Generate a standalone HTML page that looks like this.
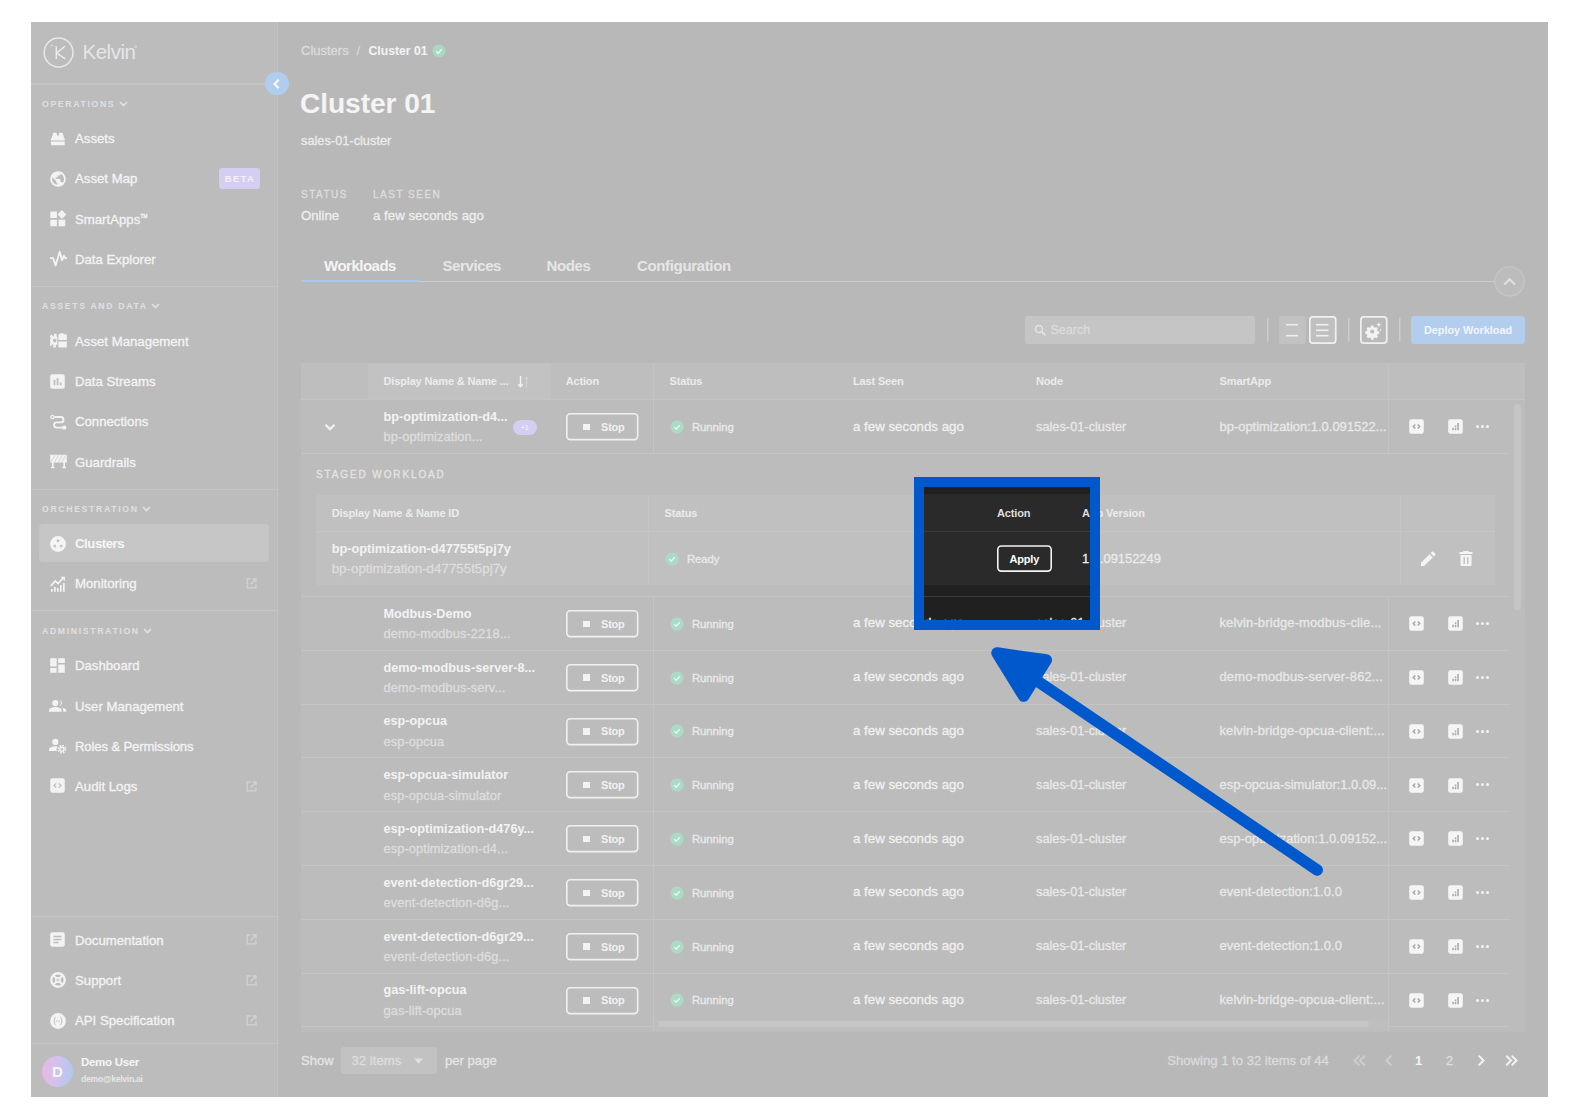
<!DOCTYPE html>
<html>
<head>
<meta charset="utf-8">
<title>Cluster 01</title>
<style>
*{box-sizing:border-box;margin:0;padding:0}
html,body{width:1580px;height:1120px;background:#fff;overflow:hidden}
body{font-family:"Liberation Sans",sans-serif;color:#f4f4f4;position:relative}
#app{position:absolute;left:31px;top:22px;width:1517px;height:1075px;background:#b8b8b8;overflow:hidden}
.abs{position:absolute}
/* coordinates inside #app are page coords minus (31,22); we use a wrapper shifted so children can use page coords */
#pg{position:absolute;left:-31px;top:-22px;width:1580px;height:1120px}
#side{position:absolute;left:31px;top:22px;width:247.100px;height:1075px;background:#bcbcbc;border-right:1.600px solid #c3c3c3}
.hr{position:absolute;height:1px;background:#c6c6c6}
.sec{position:absolute;left:42px;font-size:8.700px;font-weight:bold;letter-spacing:1.650px;color:#e0e0e0;line-height:10px;white-space:nowrap}
.mi{position:absolute;left:75px;font-size:13.200px;color:#f4f4f4;line-height:16px;white-space:nowrap;letter-spacing:0px}
.ico{position:absolute;left:50px;width:15px;height:15px}
.ext{position:absolute;left:246px;width:11px;height:11px}
.t{position:absolute;white-space:nowrap}
.t,.mi{-webkit-text-stroke:0.3px}
[style*="font-weight:bold"]{-webkit-text-stroke:0}
</style>
</head>
<body>
<div id="app"><div id="pg">

<!-- ============ SIDEBAR ============ -->
<div id="side"></div>
<div id="sidebar-content">
<svg class="abs" style="left:42px;top:36px" width="34" height="34" viewBox="0 0 34 34">
 <circle cx="16.600" cy="16.500" r="14.400" fill="none" stroke="#e8e8e8" stroke-width="1.500"/>
 <path d="M14.300 10.200V22.900M22.900 10.200L14.800 17L23.200 22.900" fill="none" stroke="#ececec" stroke-width="1.500"/>
 <circle cx="10" cy="9.600" r="0.800" fill="#ececec"/>
</svg>
<div class="t" style="left:82.500px;top:38.500px;font-size:20.500px;line-height:26px;color:#e6e6e6;letter-spacing:-0.500px;-webkit-text-stroke:0">Kelvin</div>
<div class="abs" style="left:133.500px;top:44.500px;width:3px;height:3px;border-radius:50%;border:0.800px solid #e0e0e0"></div>
<div class="hr" style="left:31px;top:82.500px;width:246px;height:2px;background:#c5c5c5"></div>
<div class="abs" style="left:265px;top:71.700px;width:23.600px;height:23.600px;border-radius:50%;background:#b1cdee"></div>
<svg class="abs" style="left:271px;top:77.700px" width="12" height="12" viewBox="0 0 12 12"><path d="M7.700 1.700L3.500 6L7.700 10.300" fill="none" stroke="#f8f8f8" stroke-width="2.100"/></svg>
<div class="sec" style="top:98.5px">OPERATIONS<svg width="9" height="7" viewBox="0 0 9 7" style="margin-left:3.500px"><path d="M1 2L4.500 5.500L8 2" fill="none" stroke="#e2e2e2" stroke-width="1.600"/></svg></div>
<svg class="abs" style="left:51px;top:131.5px" width="14" height="14" viewBox="0 0 14 14"><path d="M0 6.200h13.700v2.300H0zM0 9.600h13.700v3.600H0zM1 6.200V3.400h.9V1.600c0-.5.400-.9.900-.9h2.200c.5 0 .9.400.9.900v1.800h2V1.600c0-.5.400-.9.900-.9h2.200c.5 0 .9.400.9.900v1.800h.9v2.800z" fill="#f3f3f3"/></svg>
<div class="mi" style="top:131.20000000000002px;">Assets</div>
<svg class="abs" style="left:49.5px;top:170.7px" width="16" height="16" viewBox="0 0 16 16"><circle cx="8" cy="8" r="7.800" fill="#f3f3f3"/><path d="M2.300 6.300l3.600 3.500v.9c0 .8.700 1.400 1.500 1.400v1.700A5.900 5.900 0 0 1 2.300 6.300zM12.600 11.900c-.2-.6-.8-1-1.400-1h-.7V8.700c0-.4-.3-.7-.7-.7H5.600V6.500h1.400c.4 0 .7-.3.7-.7V4.400h1.500c.8 0 1.400-.6 1.400-1.400v-.3a5.900 5.900 0 0 1 2 9.200z" fill="#bcbcbc"/></svg>
<div class="mi" style="top:171.4px;">Asset Map</div>
<div class="abs" style="left:219px;top:168px;width:41px;height:21px;border-radius:3px;background:#d6cdf3;color:#f3f0fb;font-size:9.500px;font-weight:bold;letter-spacing:1.300px;line-height:21px;text-align:center;padding-left:1px">BETA</div>
<svg class="abs" style="left:50px;top:210px" width="16.5" height="16.5" viewBox="0 0 16.5 16.5"><path d="M0.300 1.500h6.600v6.600H0.300zM0.300 9.700h6.600v6.600H0.300zM8.600 9.700h6.600v6.600H8.600zM11.900 0l4.300 4.500l-4.300 4.500l-4.300-4.500z" fill="#f3f3f3"/></svg>
<div class="mi" style="top:211.6px;">SmartApps<span style="font-size:5px;position:relative;top:-5.800px;letter-spacing:0">TM</span></div>
<svg class="abs" style="left:49.5px;top:250px" width="17.5" height="18" viewBox="0 0 17.5 18"><path d="M0.200 8.200h3l2.400 7.300L9.700 1.800l2.300 8.500 1.900-4.600 1.200 2.500h1.800" fill="none" stroke="#f3f3f3" stroke-width="1.800" stroke-linejoin="round" stroke-linecap="round"/></svg>
<div class="mi" style="top:252.20000000000002px;">Data Explorer</div>
<div class="hr" style="left:31px;top:286px;width:246px"></div>
<div class="sec" style="top:301.2px">ASSETS AND DATA<svg width="9" height="7" viewBox="0 0 9 7" style="margin-left:3.500px"><path d="M1 2L4.500 5.500L8 2" fill="none" stroke="#e2e2e2" stroke-width="1.600"/></svg></div>
<svg class="abs" style="left:49.5px;top:333.2px" width="17" height="15.5" viewBox="0 0 17 15.5"><g transform="translate(4.700,7.600)"><circle r="4.600" fill="#f3f3f3"/><circle r="5.600" fill="none" stroke="#f3f3f3" stroke-width="2.400" stroke-dasharray="2.600 1.800" transform="rotate(-14)"/><circle r="1.800" fill="#bcbcbc"/></g><rect x="7.300" y="-1" width="11" height="17" fill="#bcbcbc"/><path d="M8.400 6.900V2.300c0-.6.400-1 1-1h.8V.3h3.300v1h2.300c.6 0 1 .4 1 1v4.600zM8.400 8.600h8.400v4.900c0 .6-.4 1-1 1H9.400c-.6 0-1-.4-1-1z" fill="#f3f3f3"/></svg>
<div class="mi" style="top:333.7px;">Asset Management</div>
<svg class="abs" style="left:50px;top:373.8px" width="15" height="15" viewBox="0 0 15 15"><rect x=".2" y=".2" width="14.600" height="14.600" rx="2.200" fill="#f3f3f3"/><path d="M3.600 5.800h1.700v5.500H3.600zM6.700 4h1.700v7.300H6.700zM9.800 8.600h1.700v2.700H9.800z" fill="#bcbcbc"/></svg>
<div class="mi" style="top:373.7px;">Data Streams</div>
<svg class="abs" style="left:49.5px;top:413.5px" width="17" height="16" viewBox="0 0 17 16"><path d="M4.400 3h6.400a2.700 2.700 0 0 1 0 5.400H6.600a2.600 2.600 0 0 0 0 5.200h5.600" fill="none" stroke="#f3f3f3" stroke-width="1.900"/><circle cx="2.400" cy="3" r="1.600" fill="none" stroke="#f3f3f3" stroke-width="1.300"/><circle cx="14.200" cy="13.600" r="2.200" fill="#f3f3f3"/></svg>
<div class="mi" style="top:414.4px;">Connections</div>
<svg class="abs" style="left:49.5px;top:454.3px" width="17" height="15" viewBox="0 0 17 15"><path d="M.2 .8h16.600v7.600H.2zM2 8.400h1.700v4.500h1v1.300H1v-1.300h1zM13.300 8.400H15v4.500h1v1.300h-3.700v-1.300h1z" fill="#f3f3f3"/><path d="M1 7.800L5 1.300M4.600 7.800l4-6.500M8.200 7.800l4-6.500M11.800 7.800l4-6.500" stroke="#bcbcbc" stroke-width=".6"/></svg>
<div class="mi" style="top:454.7px;">Guardrails</div>
<div class="hr" style="left:31px;top:488.500px;width:246px"></div>
<div class="sec" style="top:503.7px">ORCHESTRATION<svg width="9" height="7" viewBox="0 0 9 7" style="margin-left:3.500px"><path d="M1 2L4.500 5.500L8 2" fill="none" stroke="#e2e2e2" stroke-width="1.600"/></svg></div>
<div class="abs" style="left:39px;top:524px;width:230px;height:38px;border-radius:4px;background:#c6c6c6"></div>
<svg class="abs" style="left:49.5px;top:535.8px" width="16" height="16" viewBox="0 0 16 16"><circle cx="8" cy="8" r="7.900" fill="#f5f5f5"/><circle cx="8" cy="4.700" r="1.500" fill="#c6c6c6"/><circle cx="4.800" cy="10" r="1.500" fill="#c6c6c6"/><circle cx="11.200" cy="10" r="1.500" fill="#c6c6c6"/></svg>
<div class="mi" style="top:536.1999999999999px;font-weight:bold;letter-spacing:-0.450px;color:#f6f6f6">Clusters</div>
<svg class="abs" style="left:49.5px;top:575.5px" width="17" height="16" viewBox="0 0 17 16"><path d="M.8 9.800L5.300 5l2.900 2.600L13.300 1.800" fill="none" stroke="#f3f3f3" stroke-width="1.700"/><path d="M10.600 .8h4.300v4.300zM1 13h1.700v2.800H1zM4 11h1.700v4.800H4zM7 12h1.700v3.800H7zM10 9h1.700v6.800H10zM13 7h1.700v8.800H13z" fill="#f3f3f3"/></svg>
<div class="mi" style="top:576.4px;">Monitoring</div>
<svg class="ext" style="top:578.2px" viewBox="0 0 11 11"><path d="M4.500 1H1.200v8.800H10V6.500M6.500 1H10v3.500M10 1L4.800 6.200" fill="none" stroke="#d2d2d2" stroke-width="1.300"/></svg>
<div class="hr" style="left:31px;top:610px;width:246px"></div>
<div class="sec" style="top:625.7px">ADMINISTRATION<svg width="9" height="7" viewBox="0 0 9 7" style="margin-left:3.500px"><path d="M1 2L4.500 5.500L8 2" fill="none" stroke="#e2e2e2" stroke-width="1.600"/></svg></div>
<svg class="abs" style="left:50px;top:657.8px" width="15" height="15" viewBox="0 0 15 15"><path d="M.2 .2h6.500v8.300H.2zM8.200 .2h6.600v4.800H8.200zM8.200 6.500h6.600v8.300H8.200zM.2 10h6.500v4.800H.2z" fill="#f3f3f3"/></svg>
<div class="mi" style="top:658.1999999999999px;">Dashboard</div>
<svg class="abs" style="left:49px;top:698.5px" width="17.5" height="14" viewBox="0 0 17.5 14"><circle cx="6.300" cy="4" r="3.100" fill="#f3f3f3"/><path d="M0 12.800v-1.600c0-2.100 4.200-3.200 6.300-3.200s6.300 1.100 6.300 3.200v1.600z" fill="#f3f3f3"/><path d="M10.700 1a3.100 3.100 0 0 1 0 6 4.600 4.600 0 0 0 0-6zM12.900 8.400c1.900.4 4.400 1.300 4.400 2.900v1.500h-3.100v-1.600c0-1.200-.5-2.100-1.300-2.800z" fill="#f3f3f3"/></svg>
<div class="mi" style="top:698.5px;">User Management</div>
<svg class="abs" style="left:49px;top:738px" width="17.5" height="15.5" viewBox="0 0 17.5 15.5"><circle cx="6.300" cy="3.900" r="3.100" fill="#f3f3f3"/><path d="M0 13v-1.600c0-2.100 4.200-3.200 6.300-3.200.6 0 1.300.1 2.100.2a5.400 5.400 0 0 0-.6 4.600z" fill="#f3f3f3"/><g transform="translate(12.900,11.200)"><circle r="2.600" fill="#f3f3f3"/><circle r="3.500" fill="none" stroke="#f3f3f3" stroke-width="1.800" stroke-dasharray="1.500 1.250"/><circle r="1.200" fill="#bcbcbc"/></g></svg>
<div class="mi" style="top:738.6999999999999px;letter-spacing:-0.170px">Roles &amp; Permissions</div>
<svg class="abs" style="left:50px;top:778.3px" width="15" height="15" viewBox="0 0 15 15"><rect x=".2" y=".2" width="14.600" height="14.600" rx="2.200" fill="#f3f3f3"/><path d="M6.200 5.400L4.100 7.500l2.100 2.100M8.800 5.400l2.100 2.100-2.100 2.100" fill="none" stroke="#bcbcbc" stroke-width="1.200"/></svg>
<div class="mi" style="top:778.6999999999999px;">Audit Logs</div>
<svg class="ext" style="top:780.5px" viewBox="0 0 11 11"><path d="M4.500 1H1.200v8.800H10V6.500M6.500 1H10v3.500M10 1L4.800 6.200" fill="none" stroke="#d2d2d2" stroke-width="1.300"/></svg>
<div class="hr" style="left:31px;top:915.500px;width:246px"></div>
<svg class="abs" style="left:50px;top:932.3px" width="15" height="15" viewBox="0 0 15 15"><rect x=".2" y=".2" width="14.600" height="14.600" rx="2.200" fill="#f3f3f3"/><path d="M3.500 4.500h8M3.500 7.500h8M3.500 10.500h5" stroke="#bcbcbc" stroke-width="1.300"/></svg>
<div class="mi" style="top:932.5px;">Documentation</div>
<svg class="ext" style="top:934.3000000000001px" viewBox="0 0 11 11"><path d="M4.500 1H1.200v8.800H10V6.500M6.500 1H10v3.500M10 1L4.800 6.200" fill="none" stroke="#d2d2d2" stroke-width="1.300"/></svg>
<svg class="abs" style="left:49.5px;top:972px" width="16" height="16" viewBox="0 0 16 16"><circle cx="8" cy="8" r="7.900" fill="#f3f3f3"/><circle cx="8" cy="8" r="4.200" fill="none" stroke="#bcbcbc" stroke-width="2.700"/><path d="M3.500 3.500l9 9M12.500 3.500l-9 9" stroke="#f3f3f3" stroke-width="1.900"/><circle cx="8" cy="8" r="2.900" fill="#f3f3f3"/><circle cx="8" cy="8" r="1.500" fill="#cfcfcf"/></svg>
<div class="mi" style="top:972.6999999999999px;">Support</div>
<svg class="ext" style="top:974.5px" viewBox="0 0 11 11"><path d="M4.500 1H1.200v8.800H10V6.500M6.500 1H10v3.500M10 1L4.800 6.200" fill="none" stroke="#d2d2d2" stroke-width="1.300"/></svg>
<svg class="abs" style="left:49.5px;top:1012.5px" width="16" height="16" viewBox="0 0 16 16"><circle cx="8" cy="8" r="7.900" fill="#f3f3f3"/><path d="M5.600 4.200c-1 .2-1 .9-1 1.800s-.2 1.600-1 2c.8.400 1 1.100 1 2s0 1.600 1 1.800M10.400 4.200c1 .2 1 .9 1 1.800s.2 1.600 1 2c-.8.400-1 1.100-1 2s0 1.600-1 1.800" fill="none" stroke="#bcbcbc" stroke-width="1"/><circle cx="6.500" cy="8" r=".6" fill="#bcbcbc"/><circle cx="8" cy="8" r=".6" fill="#bcbcbc"/><circle cx="9.500" cy="8" r=".6" fill="#bcbcbc"/></svg>
<div class="mi" style="top:1013.1999999999999px;">API Specification</div>
<svg class="ext" style="top:1015.0px" viewBox="0 0 11 11"><path d="M4.500 1H1.200v8.800H10V6.500M6.500 1H10v3.500M10 1L4.800 6.200" fill="none" stroke="#d2d2d2" stroke-width="1.300"/></svg>
<div class="hr" style="left:31px;top:1043px;width:246px"></div>
<div class="abs" style="left:42px;top:1055.500px;width:31px;height:31px;border-radius:50%;background:linear-gradient(95deg,#eab8e2 0%,#cfc3ec 50%,#aec7f1 100%);color:#f6f6f6;font-weight:bold;font-size:15px;line-height:31px;text-align:center">D</div>
<div class="t" style="left:81px;top:1055px;font-size:11.500px;font-weight:bold;line-height:14px;color:#f6f6f6;letter-spacing:-0.300px">Demo User</div>
<div class="t" style="left:81px;top:1073.800px;font-size:8.700px;font-weight:bold;line-height:10px;color:#e6e6e6;letter-spacing:-0.300px">demo@kelvin.ai</div>
</div><!--/sidebar-content-->

<!-- ============ MAIN ============ -->
<div id="main-content">
<div class="t" style="left:301px;top:43px;font-size:13px;line-height:16px;color:#dcdcdc">Clusters</div>
<div class="t" style="left:356.500px;top:43px;font-size:13px;line-height:16px;color:#d6d6d6">/</div>
<div class="t" style="left:368.500px;top:43px;font-size:12.200px;line-height:16px;font-weight:bold;color:#f4f4f4">Cluster 01</div>
<svg class="abs" style="left:432px;top:44.300px" width="14" height="14" viewBox="-0.5 -0.5 14 14"><circle cx="6.500" cy="6.500" r="6.500" fill="#a9d9c4"/><path d="M3.700 6.700l2 2l3.600-3.900" fill="none" stroke="#eef8f3" stroke-width="1.400"/></svg>
<div class="t" style="left:300px;top:86px;font-size:28.200px;line-height:34px;font-weight:bold;color:#f4f4f4;letter-spacing:-0.100px">Cluster 01</div>
<div class="t" style="left:301px;top:132.500px;font-size:12.800px;line-height:16px;color:#ececec">sales-01-cluster</div>
<div class="t" style="left:301px;top:188.500px;font-size:10px;line-height:12px;color:#dedede;letter-spacing:1.500px">STATUS</div>
<div class="t" style="left:373px;top:188.500px;font-size:10px;line-height:12px;color:#dedede;letter-spacing:1.500px">LAST SEEN</div>
<div class="t" style="left:301px;top:208px;font-size:13.200px;line-height:16px;color:#efefef">Online</div>
<div class="t" style="left:373px;top:208px;font-size:13.300px;line-height:16px;color:#efefef">a few seconds ago</div>
<div class="t" style="left:324px;top:257px;font-size:15px;line-height:18px;font-weight:bold;color:#f4f4f4;letter-spacing:-0.5px">Workloads</div>
<div class="t" style="left:442.5px;top:257px;font-size:15px;line-height:18px;font-weight:bold;color:#e6e6e6;letter-spacing:-0.4px">Services</div>
<div class="t" style="left:546.5px;top:257px;font-size:15px;line-height:18px;font-weight:bold;color:#e6e6e6;letter-spacing:-0.4px">Nodes</div>
<div class="t" style="left:637px;top:257px;font-size:15px;line-height:18px;font-weight:bold;color:#e6e6e6;letter-spacing:-0.35px">Configuration</div>
<div class="abs" style="left:301px;top:281px;width:1194px;height:1px;background:#cccccc"></div>
<div class="abs" style="left:301px;top:279.500px;width:118px;height:2.500px;background:#a9c6ee"></div>
<svg class="abs" style="left:1492px;top:264px" width="36" height="36" viewBox="1492 264 36 36"><circle cx="1509.600" cy="281.300" r="14.700" fill="#bcbcbc" stroke="#c5c5c5" stroke-width="1.400"/><path d="M1504.300 284.500l5.300-5.300 5.300 5.300" fill="none" stroke="#dedede" stroke-width="2.200"/></svg>
<div class="abs" style="left:1025px;top:316px;width:230px;height:28px;border-radius:3px;background:#c5c5c5"></div>
<svg class="abs" style="left:1034px;top:323.800px" width="13" height="13" viewBox="0 0 13 13"><circle cx="5" cy="5" r="3.500" fill="none" stroke="#e4e4e4" stroke-width="1.500"/><path d="M7.600 7.600l3.800 3.800" stroke="#e4e4e4" stroke-width="1.600"/></svg>
<div class="t" style="left:1050.500px;top:322.100px;font-size:12.500px;line-height:16px;color:#dcdcdc">Search</div>
<svg class="abs" style="left:1265.5px;top:317px" width="3.5" height="27" viewBox="1265.5 317 3.5 27"><rect x="1266.5" y="318" width="1.5" height="23.5" fill="#cccccc"/></svg>
<svg class="abs" style="left:1277.7px;top:315px" width="28.8" height="30" viewBox="1277.7 315 28.8 30"><rect x="1278.7" y="316.0" width="26.8" height="28" rx="2.5" fill="#c2c2c2" stroke="none" stroke-width="0"/></svg>
<svg class="abs" style="left:1285.3px;top:322px" width="14" height="5" viewBox="1285.3 322 14 5"><rect x="1286.3" y="323.9" width="12" height="1.6" fill="#ececec"/></svg>
<svg class="abs" style="left:1285.3px;top:333px" width="14" height="5" viewBox="1285.3 333 14 5"><rect x="1286.3" y="334.9" width="12" height="1.6" fill="#ececec"/></svg>
<svg class="abs" style="left:1307.8px;top:315px" width="29.6" height="30" viewBox="1307.8 315 29.6 30"><rect x="1309.6499999999999" y="316.85" width="25.900000000000002" height="26.3" rx="2.8" fill="#c0c0c0" stroke="#f0f0f0" stroke-width="1.7"/></svg>
<svg class="abs" style="left:1315.3px;top:322px" width="14.5" height="5" viewBox="1315.3 322 14.5 5"><rect x="1316.3" y="323.9" width="12.5" height="1.6" fill="#f0f0f0"/></svg>
<svg class="abs" style="left:1315.3px;top:328px" width="14.5" height="5" viewBox="1315.3 328 14.5 5"><rect x="1316.3" y="329.5" width="12.5" height="1.6" fill="#f0f0f0"/></svg>
<svg class="abs" style="left:1315.3px;top:333px" width="14.5" height="5" viewBox="1315.3 333 14.5 5"><rect x="1316.3" y="334.9" width="12.5" height="1.6" fill="#f0f0f0"/></svg>
<svg class="abs" style="left:1347.3px;top:317px" width="3.5" height="27" viewBox="1347.3 317 3.5 27"><rect x="1348.3" y="318" width="1.5" height="23.5" fill="#cccccc"/></svg>
<svg class="abs" style="left:1358.8px;top:315px" width="29.6" height="30" viewBox="1358.8 315 29.6 30"><rect x="1360.6499999999999" y="316.85" width="25.900000000000002" height="26.3" rx="3.2" fill="#bababa" stroke="#f0f0f0" stroke-width="1.7"/></svg>
<svg class="abs" style="left:1364.300px;top:320.600px" width="19" height="19" viewBox="0 0 19 19"><g transform="translate(8.200,10.500)"><path d="M-1.200-6.300h2.400l.4 1.700 1.300.6 1.500-.9 1.700 1.700-.9 1.500.6 1.300 1.700.4v2.400l-1.700.4-.6 1.300.9 1.500-1.700 1.700-1.500-.9-1.300.6-.4 1.700h-2.400l-.4-1.700-1.300-.6-1.500.9-1.700-1.700.9-1.500-.6-1.300-1.700-.4v-2.400l1.700-.4.6-1.300-.9-1.500 1.700-1.700 1.500.9 1.300-.6z" fill="#f2f2f2" transform="scale(0.940)"/><circle r="2.100" fill="#bcbcbc"/></g><path d="M14.800 1l.8 1.900 1.900.8-1.900.8-.8 1.900-.8-1.900-1.900-.8 1.900-.8z" fill="#f2f2f2"/><path d="M16.500 7.800l.4 1 .9.400-.9.400-.4 1-.4-1-1-.4 1-.4z" fill="#f2f2f2"/></svg>
<svg class="abs" style="left:1398.3px;top:317px" width="3.5" height="27" viewBox="1398.3 317 3.5 27"><rect x="1399.3" y="318" width="1.5" height="23.5" fill="#cccccc"/></svg>
<div class="abs" style="left:1411px;top:316px;width:114px;height:28px;border-radius:3.500px;background:#b3cdee;color:#f2f6fc;font-size:10.800px;font-weight:bold;line-height:29px;text-align:center;white-space:nowrap">Deploy Workload</div>
<div class="abs" style="left:301px;top:363px;width:1224px;height:668.500px;background:#bcbcbc"></div>
<div class="abs" style="left:301px;top:363px;width:1224px;height:36.500px;background:#bebebe"></div>
<div class="abs" style="left:368px;top:363px;width:183px;height:36.500px;background:#c2c2c2"></div>
<div class="t" style="left:383.5px;top:373.500px;font-size:11px;line-height:14px;font-weight:bold;color:#ececec;letter-spacing:-0.150px;">Display Name &amp; Name ...</div>
<svg class="abs" style="left:517px;top:374.500px" width="14" height="14" viewBox="0 0 14 14"><path d="M3.500 1v10.500M1.200 9.200l2.300 2.500 2.300-2.500" fill="none" stroke="#f2f2f2" stroke-width="1.500"/><path d="M9.500 12.500V2M7.700 4l1.800-2 1.800 2" fill="none" stroke="#d4d4d4" stroke-width="1"/></svg>
<div class="t" style="left:565.7px;top:373.500px;font-size:11px;line-height:14px;font-weight:bold;color:#ececec;letter-spacing:-0.150px;">Action</div>
<div class="t" style="left:669.5px;top:373.500px;font-size:11px;line-height:14px;font-weight:bold;color:#ececec;letter-spacing:-0.150px;">Status</div>
<div class="t" style="left:853px;top:373.500px;font-size:11px;line-height:14px;font-weight:bold;color:#ececec;letter-spacing:-0.150px;">Last Seen</div>
<div class="t" style="left:1036px;top:373.500px;font-size:11px;line-height:14px;font-weight:bold;color:#ececec;letter-spacing:-0.150px;">Node</div>
<div class="t" style="left:1219.6px;top:373.500px;font-size:11px;line-height:14px;font-weight:bold;color:#ececec;letter-spacing:-0.150px;">SmartApp</div>
<div class="abs" style="left:301px;top:399px;width:1224px;height:1px;background:#c4c4c4"></div>
<div class="abs" style="left:301px;top:453.0px;width:1209px;height:1px;background:#c4c4c4"></div>
<svg class="abs" style="left:323.500px;top:422.8px" width="12" height="9" viewBox="0 0 12 9"><path d="M1.500 1.800L6 6.300l4.500-4.500" fill="none" stroke="#f4f4f4" stroke-width="2"/></svg>
<div class="t" style="left:383.500px;top:408.8px;font-size:12.700px;line-height:16px;font-weight:bold;color:#f3f3f3;letter-spacing:0px">bp-optimization-d4...</div>
<div class="t" style="left:383.500px;top:429.3px;font-size:12.800px;line-height:16px;color:#dedede;letter-spacing:0.100px">bp-optimization...</div>
<div class="abs" style="left:513px;top:419.5px;width:23.500px;height:15px;border-radius:8px;background:#d6cdf3;color:#efeafa;font-size:7px;font-weight:bold;line-height:15px;text-align:center">+1</div>
<svg class="abs" style="left:564.5px;top:412.1px" width="74.5" height="29.4" viewBox="564.5 412.1 74.5 29.4"><rect x="566.3" y="413.90000000000003" width="70.9" height="25.799999999999997" rx="3.5" fill="none" stroke="#f0f0f0" stroke-width="1.6"/></svg>
<div class="abs" style="left:583px;top:423.6px;width:6.500px;height:6.500px;background:#f2f2f2"></div>
<div class="t" style="left:601px;top:419.8px;font-size:11px;line-height:14px;font-weight:bold;color:#f2f2f2;letter-spacing:-0.200px">Stop</div>
<svg class="abs" style="left:670px;top:419.8px" width="14" height="14" viewBox="-0.5 -0.5 14 14"><circle cx="6.500" cy="6.500" r="6.600" fill="#abdac6"/><path d="M3.700 6.700l2 2l3.600-3.900" fill="none" stroke="#e9f6f0" stroke-width="1.400"/></svg>
<div class="t" style="left:692px;top:419.8px;font-size:11.300px;line-height:14px;color:#ebebeb;letter-spacing:-0.050px">Running</div>
<div class="t" style="left:853px;top:418.5px;font-size:13.300px;line-height:16px;color:#f1f1f1">a few seconds ago</div>
<div class="t" style="left:1036px;top:418.5px;font-size:12.800px;line-height:16px;color:#e9e9e9">sales-01-cluster</div>
<div class="t" style="left:1219.500px;top:418.5px;font-size:12.950px;line-height:16px;color:#e9e9e9;letter-spacing:0px">bp-optimization:1.0.091522...</div>
<svg class="abs" style="left:1409px;top:419.3px" width="15" height="15" viewBox="0 0 15 15"><rect x=".2" y=".2" width="14.600" height="14.600" rx="2.200" fill="#f5f5f5"/><path d="M6.300 5.400L4.200 7.500l2.100 2.100M8.700 5.400l2.100 2.100-2.100 2.100" fill="none" stroke="#a6a6a6" stroke-width="1.400"/></svg>
<svg class="abs" style="left:1447.600px;top:419.3px" width="15" height="15" viewBox="0 0 15 15"><rect x=".2" y=".2" width="14.600" height="14.600" rx="2.200" fill="#f5f5f5"/><path d="M4.300 8.700h1.500v2.600H4.300zM6.800 6.600h1.500v1.600H6.800zM6.800 9.100h1.500v2.200H6.800zM9.300 3.900h1.500v7.400H9.300z" fill="#a8a8a8"/></svg>
<div class="abs" style="left:1475.6px;top:425.0px;width:3.200px;height:3.200px;border-radius:50%;background:#f4f4f4"></div>
<div class="abs" style="left:1480.6px;top:425.0px;width:3.200px;height:3.200px;border-radius:50%;background:#f4f4f4"></div>
<div class="abs" style="left:1485.6px;top:425.0px;width:3.200px;height:3.200px;border-radius:50%;background:#f4f4f4"></div>
<div class="t" style="left:316px;top:468.700px;font-size:10px;line-height:12px;color:#e4e4e4;letter-spacing:1.880px">STAGED WORKLOAD</div>
<div class="abs" style="left:316px;top:494.500px;width:1179px;height:90.500px;background:#c0c0c0"></div>
<div class="abs" style="left:316px;top:531px;width:1179px;height:1px;background:#c5c5c5"></div>
<div class="t" style="left:331.7px;top:505.700px;font-size:11px;line-height:14px;font-weight:bold;color:#ececec;letter-spacing:-0.130px">Display Name &amp; Name ID</div>
<div class="t" style="left:664.5px;top:505.700px;font-size:11px;line-height:14px;font-weight:bold;color:#ececec;letter-spacing:-0.130px">Status</div>
<div class="t" style="left:997px;top:505.700px;font-size:11px;line-height:14px;font-weight:bold;color:#ececec;letter-spacing:-0.130px">Action</div>
<div class="t" style="left:1082px;top:505.700px;font-size:11px;line-height:14px;font-weight:bold;color:#ececec;letter-spacing:-0.130px">App Version</div>
<div class="abs" style="left:648px;top:494.500px;width:1px;height:90.500px;background:#c5c5c5"></div>
<div class="abs" style="left:1399.500px;top:494.500px;width:1px;height:90.500px;background:#c6c6c6"></div>
<div class="t" style="left:331.700px;top:540.500px;font-size:12.850px;line-height:16px;font-weight:bold;color:#f3f3f3;letter-spacing:-0.050px">bp-optimization-d47755t5pj7y</div>
<div class="t" style="left:331.700px;top:560.500px;font-size:13.350px;line-height:16px;color:#dedede">bp-optimization-d47755t5pj7y</div>
<svg class="abs" style="left:665px;top:551.5px" width="14" height="14" viewBox="-0.5 -0.5 14 14"><circle cx="6.500" cy="6.500" r="6.600" fill="#abdac6"/><path d="M3.700 6.700l2 2l3.600-3.900" fill="none" stroke="#e9f6f0" stroke-width="1.400"/></svg>
<div class="t" style="left:687px;top:551.5px;font-size:11.300px;line-height:14px;color:#ebebeb;letter-spacing:-0.050px">Ready</div>
<svg class="abs" style="left:996px;top:544.2px" width="57" height="28.7" viewBox="996 544.2 57 28.7"><rect x="997.8" y="546.0" width="53.4" height="25.099999999999998" rx="3.5" fill="none" stroke="#f0f0f0" stroke-width="1.6"/></svg>
<div class="t" style="left:1009.500px;top:551.500px;font-size:11px;line-height:14px;font-weight:bold;color:#f2f2f2;letter-spacing:-0.200px">Apply</div>
<div class="t" style="left:1082px;top:550.500px;font-size:12.900px;line-height:16px;color:#ececec">1.0.09152249</div>
<svg class="abs" style="left:1420px;top:550.500px" width="16" height="16" viewBox="0 0 16 16"><path d="M1 15v-3.200l8.600-8.600 3.200 3.200L4.200 15zM10.600 2.200l1.400-1.400c.4-.4 1-.4 1.400 0l1.800 1.800c.4.4.4 1 0 1.400l-1.400 1.400z" fill="#f4f4f4"/></svg>
<svg class="abs" style="left:1459px;top:550px" width="14" height="17" viewBox="0 0 14 17"><path d="M4.500 1h5l.700 1H13.500v2H.5V2h3.300zM1.500 5h11v9.500c0 1-.700 1.500-1.500 1.500H3c-.800 0-1.500-.5-1.500-1.500z" fill="#f4f4f4"/><path d="M5.200 7v7M8.800 7v7" stroke="#c0c0c0" stroke-width="1.400"/></svg>
<div class="abs" style="left:301px;top:596px;width:1209px;height:1px;background:#c4c4c4"></div>
<div class="abs" style="left:301px;top:649.8px;width:1209px;height:1px;background:#c4c4c4"></div>
<div class="t" style="left:383.500px;top:605.6999999999999px;font-size:12.700px;line-height:16px;font-weight:bold;color:#f3f3f3;letter-spacing:0px">Modbus-Demo</div>
<div class="t" style="left:383.500px;top:626.1999999999999px;font-size:12.800px;line-height:16px;color:#dedede;letter-spacing:0.100px">demo-modbus-2218...</div>
<svg class="abs" style="left:564.5px;top:609.0px" width="74.5" height="29.4" viewBox="564.5 609.0 74.5 29.4"><rect x="566.3" y="610.8" width="70.9" height="25.799999999999997" rx="3.5" fill="none" stroke="#f0f0f0" stroke-width="1.6"/></svg>
<div class="abs" style="left:583px;top:620.4999999999999px;width:6.500px;height:6.500px;background:#f2f2f2"></div>
<div class="t" style="left:601px;top:616.6999999999999px;font-size:11px;line-height:14px;font-weight:bold;color:#f2f2f2;letter-spacing:-0.200px">Stop</div>
<svg class="abs" style="left:670px;top:616.6999999999999px" width="14" height="14" viewBox="-0.5 -0.5 14 14"><circle cx="6.500" cy="6.500" r="6.600" fill="#abdac6"/><path d="M3.700 6.700l2 2l3.600-3.900" fill="none" stroke="#e9f6f0" stroke-width="1.400"/></svg>
<div class="t" style="left:692px;top:616.6999999999999px;font-size:11.300px;line-height:14px;color:#ebebeb;letter-spacing:-0.050px">Running</div>
<div class="t" style="left:853px;top:615.4px;font-size:13.300px;line-height:16px;color:#f1f1f1">a few seconds ago</div>
<div class="t" style="left:1036px;top:615.4px;font-size:12.800px;line-height:16px;color:#e9e9e9">sales-01-cluster</div>
<div class="t" style="left:1219.500px;top:615.4px;font-size:12.950px;line-height:16px;color:#e9e9e9;letter-spacing:0.14px">kelvin-bridge-modbus-clie...</div>
<svg class="abs" style="left:1409px;top:616.1999999999999px" width="15" height="15" viewBox="0 0 15 15"><rect x=".2" y=".2" width="14.600" height="14.600" rx="2.200" fill="#f5f5f5"/><path d="M6.300 5.400L4.200 7.500l2.100 2.100M8.700 5.400l2.100 2.100-2.100 2.100" fill="none" stroke="#a6a6a6" stroke-width="1.400"/></svg>
<svg class="abs" style="left:1447.600px;top:616.1999999999999px" width="15" height="15" viewBox="0 0 15 15"><rect x=".2" y=".2" width="14.600" height="14.600" rx="2.200" fill="#f5f5f5"/><path d="M4.300 8.700h1.500v2.600H4.300zM6.800 6.600h1.500v1.600H6.800zM6.800 9.100h1.500v2.200H6.800zM9.300 3.900h1.500v7.400H9.300z" fill="#a8a8a8"/></svg>
<div class="abs" style="left:1475.6px;top:621.9px;width:3.200px;height:3.200px;border-radius:50%;background:#f4f4f4"></div>
<div class="abs" style="left:1480.6px;top:621.9px;width:3.200px;height:3.200px;border-radius:50%;background:#f4f4f4"></div>
<div class="abs" style="left:1485.6px;top:621.9px;width:3.200px;height:3.200px;border-radius:50%;background:#f4f4f4"></div>
<div class="abs" style="left:301px;top:703.5999999999999px;width:1209px;height:1px;background:#c4c4c4"></div>
<div class="t" style="left:383.500px;top:659.4999999999999px;font-size:12.700px;line-height:16px;font-weight:bold;color:#f3f3f3;letter-spacing:0px">demo-modbus-server-8...</div>
<div class="t" style="left:383.500px;top:679.9999999999999px;font-size:12.800px;line-height:16px;color:#dedede;letter-spacing:0.100px">demo-modbus-serv...</div>
<svg class="abs" style="left:564.5px;top:662.8px" width="74.5" height="29.4" viewBox="564.5 662.8 74.5 29.4"><rect x="566.3" y="664.5999999999999" width="70.9" height="25.799999999999997" rx="3.5" fill="none" stroke="#f0f0f0" stroke-width="1.6"/></svg>
<div class="abs" style="left:583px;top:674.2999999999998px;width:6.500px;height:6.500px;background:#f2f2f2"></div>
<div class="t" style="left:601px;top:670.4999999999999px;font-size:11px;line-height:14px;font-weight:bold;color:#f2f2f2;letter-spacing:-0.200px">Stop</div>
<svg class="abs" style="left:670px;top:670.4999999999999px" width="14" height="14" viewBox="-0.5 -0.5 14 14"><circle cx="6.500" cy="6.500" r="6.600" fill="#abdac6"/><path d="M3.700 6.700l2 2l3.600-3.900" fill="none" stroke="#e9f6f0" stroke-width="1.400"/></svg>
<div class="t" style="left:692px;top:670.4999999999999px;font-size:11.300px;line-height:14px;color:#ebebeb;letter-spacing:-0.050px">Running</div>
<div class="t" style="left:853px;top:669.1999999999999px;font-size:13.300px;line-height:16px;color:#f1f1f1">a few seconds ago</div>
<div class="t" style="left:1036px;top:669.1999999999999px;font-size:12.800px;line-height:16px;color:#e9e9e9">sales-01-cluster</div>
<div class="t" style="left:1219.500px;top:669.1999999999999px;font-size:12.950px;line-height:16px;color:#e9e9e9;letter-spacing:0.16px">demo-modbus-server-862...</div>
<svg class="abs" style="left:1409px;top:669.9999999999999px" width="15" height="15" viewBox="0 0 15 15"><rect x=".2" y=".2" width="14.600" height="14.600" rx="2.200" fill="#f5f5f5"/><path d="M6.300 5.400L4.200 7.500l2.100 2.100M8.700 5.400l2.100 2.100-2.100 2.100" fill="none" stroke="#a6a6a6" stroke-width="1.400"/></svg>
<svg class="abs" style="left:1447.600px;top:669.9999999999999px" width="15" height="15" viewBox="0 0 15 15"><rect x=".2" y=".2" width="14.600" height="14.600" rx="2.200" fill="#f5f5f5"/><path d="M4.300 8.700h1.500v2.600H4.300zM6.800 6.600h1.500v1.600H6.800zM6.800 9.100h1.500v2.200H6.800zM9.300 3.900h1.500v7.400H9.300z" fill="#a8a8a8"/></svg>
<div class="abs" style="left:1475.6px;top:675.6999999999999px;width:3.200px;height:3.200px;border-radius:50%;background:#f4f4f4"></div>
<div class="abs" style="left:1480.6px;top:675.6999999999999px;width:3.200px;height:3.200px;border-radius:50%;background:#f4f4f4"></div>
<div class="abs" style="left:1485.6px;top:675.6999999999999px;width:3.200px;height:3.200px;border-radius:50%;background:#f4f4f4"></div>
<div class="abs" style="left:301px;top:757.4px;width:1209px;height:1px;background:#c4c4c4"></div>
<div class="t" style="left:383.500px;top:713.3px;font-size:12.700px;line-height:16px;font-weight:bold;color:#f3f3f3;letter-spacing:0px">esp-opcua</div>
<div class="t" style="left:383.500px;top:733.8px;font-size:12.800px;line-height:16px;color:#dedede;letter-spacing:0.100px">esp-opcua</div>
<svg class="abs" style="left:564.5px;top:716.6px" width="74.5" height="29.4" viewBox="564.5 716.6 74.5 29.4"><rect x="566.3" y="718.4" width="70.9" height="25.799999999999997" rx="3.5" fill="none" stroke="#f0f0f0" stroke-width="1.6"/></svg>
<div class="abs" style="left:583px;top:728.0999999999999px;width:6.500px;height:6.500px;background:#f2f2f2"></div>
<div class="t" style="left:601px;top:724.3px;font-size:11px;line-height:14px;font-weight:bold;color:#f2f2f2;letter-spacing:-0.200px">Stop</div>
<svg class="abs" style="left:670px;top:724.3px" width="14" height="14" viewBox="-0.5 -0.5 14 14"><circle cx="6.500" cy="6.500" r="6.600" fill="#abdac6"/><path d="M3.700 6.700l2 2l3.600-3.900" fill="none" stroke="#e9f6f0" stroke-width="1.400"/></svg>
<div class="t" style="left:692px;top:724.3px;font-size:11.300px;line-height:14px;color:#ebebeb;letter-spacing:-0.050px">Running</div>
<div class="t" style="left:853px;top:723.0px;font-size:13.300px;line-height:16px;color:#f1f1f1">a few seconds ago</div>
<div class="t" style="left:1036px;top:723.0px;font-size:12.800px;line-height:16px;color:#e9e9e9">sales-01-cluster</div>
<div class="t" style="left:1219.500px;top:723.0px;font-size:12.950px;line-height:16px;color:#e9e9e9;letter-spacing:0.11px">kelvin-bridge-opcua-client:...</div>
<svg class="abs" style="left:1409px;top:723.8px" width="15" height="15" viewBox="0 0 15 15"><rect x=".2" y=".2" width="14.600" height="14.600" rx="2.200" fill="#f5f5f5"/><path d="M6.300 5.400L4.200 7.500l2.100 2.100M8.700 5.400l2.100 2.100-2.100 2.100" fill="none" stroke="#a6a6a6" stroke-width="1.400"/></svg>
<svg class="abs" style="left:1447.600px;top:723.8px" width="15" height="15" viewBox="0 0 15 15"><rect x=".2" y=".2" width="14.600" height="14.600" rx="2.200" fill="#f5f5f5"/><path d="M4.300 8.700h1.500v2.600H4.300zM6.800 6.600h1.500v1.600H6.800zM6.800 9.100h1.500v2.200H6.800zM9.300 3.900h1.500v7.400H9.300z" fill="#a8a8a8"/></svg>
<div class="abs" style="left:1475.6px;top:729.5px;width:3.200px;height:3.200px;border-radius:50%;background:#f4f4f4"></div>
<div class="abs" style="left:1480.6px;top:729.5px;width:3.200px;height:3.200px;border-radius:50%;background:#f4f4f4"></div>
<div class="abs" style="left:1485.6px;top:729.5px;width:3.200px;height:3.200px;border-radius:50%;background:#f4f4f4"></div>
<div class="abs" style="left:301px;top:811.1999999999999px;width:1209px;height:1px;background:#c4c4c4"></div>
<div class="t" style="left:383.500px;top:767.0999999999999px;font-size:12.700px;line-height:16px;font-weight:bold;color:#f3f3f3;letter-spacing:0px">esp-opcua-simulator</div>
<div class="t" style="left:383.500px;top:787.5999999999999px;font-size:12.800px;line-height:16px;color:#dedede;letter-spacing:0.100px">esp-opcua-simulator</div>
<svg class="abs" style="left:564.5px;top:770.4px" width="74.5" height="29.4" viewBox="564.5 770.4 74.5 29.4"><rect x="566.3" y="772.1999999999999" width="70.9" height="25.799999999999997" rx="3.5" fill="none" stroke="#f0f0f0" stroke-width="1.6"/></svg>
<div class="abs" style="left:583px;top:781.8999999999999px;width:6.500px;height:6.500px;background:#f2f2f2"></div>
<div class="t" style="left:601px;top:778.0999999999999px;font-size:11px;line-height:14px;font-weight:bold;color:#f2f2f2;letter-spacing:-0.200px">Stop</div>
<svg class="abs" style="left:670px;top:778.0999999999999px" width="14" height="14" viewBox="-0.5 -0.5 14 14"><circle cx="6.500" cy="6.500" r="6.600" fill="#abdac6"/><path d="M3.700 6.700l2 2l3.600-3.900" fill="none" stroke="#e9f6f0" stroke-width="1.400"/></svg>
<div class="t" style="left:692px;top:778.0999999999999px;font-size:11.300px;line-height:14px;color:#ebebeb;letter-spacing:-0.050px">Running</div>
<div class="t" style="left:853px;top:776.8px;font-size:13.300px;line-height:16px;color:#f1f1f1">a few seconds ago</div>
<div class="t" style="left:1036px;top:776.8px;font-size:12.800px;line-height:16px;color:#e9e9e9">sales-01-cluster</div>
<div class="t" style="left:1219.500px;top:776.8px;font-size:12.950px;line-height:16px;color:#e9e9e9;letter-spacing:0px">esp-opcua-simulator:1.0.09...</div>
<svg class="abs" style="left:1409px;top:777.5999999999999px" width="15" height="15" viewBox="0 0 15 15"><rect x=".2" y=".2" width="14.600" height="14.600" rx="2.200" fill="#f5f5f5"/><path d="M6.300 5.400L4.200 7.500l2.100 2.100M8.700 5.400l2.100 2.100-2.100 2.100" fill="none" stroke="#a6a6a6" stroke-width="1.400"/></svg>
<svg class="abs" style="left:1447.600px;top:777.5999999999999px" width="15" height="15" viewBox="0 0 15 15"><rect x=".2" y=".2" width="14.600" height="14.600" rx="2.200" fill="#f5f5f5"/><path d="M4.300 8.700h1.500v2.600H4.300zM6.800 6.600h1.500v1.600H6.800zM6.800 9.100h1.500v2.200H6.800zM9.300 3.900h1.500v7.400H9.300z" fill="#a8a8a8"/></svg>
<div class="abs" style="left:1475.6px;top:783.3px;width:3.200px;height:3.200px;border-radius:50%;background:#f4f4f4"></div>
<div class="abs" style="left:1480.6px;top:783.3px;width:3.200px;height:3.200px;border-radius:50%;background:#f4f4f4"></div>
<div class="abs" style="left:1485.6px;top:783.3px;width:3.200px;height:3.200px;border-radius:50%;background:#f4f4f4"></div>
<div class="abs" style="left:301px;top:865.0px;width:1209px;height:1px;background:#c4c4c4"></div>
<div class="t" style="left:383.500px;top:820.9px;font-size:12.700px;line-height:16px;font-weight:bold;color:#f3f3f3;letter-spacing:0px">esp-optimization-d476y...</div>
<div class="t" style="left:383.500px;top:841.4px;font-size:12.800px;line-height:16px;color:#dedede;letter-spacing:0.100px">esp-optimization-d4...</div>
<svg class="abs" style="left:564.5px;top:824.2px" width="74.5" height="29.4" viewBox="564.5 824.2 74.5 29.4"><rect x="566.3" y="826.0" width="70.9" height="25.799999999999997" rx="3.5" fill="none" stroke="#f0f0f0" stroke-width="1.6"/></svg>
<div class="abs" style="left:583px;top:835.6999999999999px;width:6.500px;height:6.500px;background:#f2f2f2"></div>
<div class="t" style="left:601px;top:831.9px;font-size:11px;line-height:14px;font-weight:bold;color:#f2f2f2;letter-spacing:-0.200px">Stop</div>
<svg class="abs" style="left:670px;top:831.9px" width="14" height="14" viewBox="-0.5 -0.5 14 14"><circle cx="6.500" cy="6.500" r="6.600" fill="#abdac6"/><path d="M3.700 6.700l2 2l3.600-3.900" fill="none" stroke="#e9f6f0" stroke-width="1.400"/></svg>
<div class="t" style="left:692px;top:831.9px;font-size:11.300px;line-height:14px;color:#ebebeb;letter-spacing:-0.050px">Running</div>
<div class="t" style="left:853px;top:830.6px;font-size:13.300px;line-height:16px;color:#f1f1f1">a few seconds ago</div>
<div class="t" style="left:1036px;top:830.6px;font-size:12.800px;line-height:16px;color:#e9e9e9">sales-01-cluster</div>
<div class="t" style="left:1219.500px;top:830.6px;font-size:12.950px;line-height:16px;color:#e9e9e9;letter-spacing:0.05px">esp-optimization:1.0.09152...</div>
<svg class="abs" style="left:1409px;top:831.4px" width="15" height="15" viewBox="0 0 15 15"><rect x=".2" y=".2" width="14.600" height="14.600" rx="2.200" fill="#f5f5f5"/><path d="M6.300 5.400L4.200 7.500l2.100 2.100M8.700 5.400l2.100 2.100-2.100 2.100" fill="none" stroke="#a6a6a6" stroke-width="1.400"/></svg>
<svg class="abs" style="left:1447.600px;top:831.4px" width="15" height="15" viewBox="0 0 15 15"><rect x=".2" y=".2" width="14.600" height="14.600" rx="2.200" fill="#f5f5f5"/><path d="M4.300 8.700h1.500v2.600H4.300zM6.800 6.600h1.500v1.600H6.800zM6.800 9.100h1.500v2.200H6.800zM9.300 3.900h1.500v7.400H9.300z" fill="#a8a8a8"/></svg>
<div class="abs" style="left:1475.6px;top:837.1px;width:3.200px;height:3.200px;border-radius:50%;background:#f4f4f4"></div>
<div class="abs" style="left:1480.6px;top:837.1px;width:3.200px;height:3.200px;border-radius:50%;background:#f4f4f4"></div>
<div class="abs" style="left:1485.6px;top:837.1px;width:3.200px;height:3.200px;border-radius:50%;background:#f4f4f4"></div>
<div class="abs" style="left:301px;top:918.8px;width:1209px;height:1px;background:#c4c4c4"></div>
<div class="t" style="left:383.500px;top:874.6999999999999px;font-size:12.700px;line-height:16px;font-weight:bold;color:#f3f3f3;letter-spacing:0px">event-detection-d6gr29...</div>
<div class="t" style="left:383.500px;top:895.1999999999999px;font-size:12.800px;line-height:16px;color:#dedede;letter-spacing:0.100px">event-detection-d6g...</div>
<svg class="abs" style="left:564.5px;top:878.0px" width="74.5" height="29.4" viewBox="564.5 878.0 74.5 29.4"><rect x="566.3" y="879.8" width="70.9" height="25.799999999999997" rx="3.5" fill="none" stroke="#f0f0f0" stroke-width="1.6"/></svg>
<div class="abs" style="left:583px;top:889.4999999999999px;width:6.500px;height:6.500px;background:#f2f2f2"></div>
<div class="t" style="left:601px;top:885.6999999999999px;font-size:11px;line-height:14px;font-weight:bold;color:#f2f2f2;letter-spacing:-0.200px">Stop</div>
<svg class="abs" style="left:670px;top:885.6999999999999px" width="14" height="14" viewBox="-0.5 -0.5 14 14"><circle cx="6.500" cy="6.500" r="6.600" fill="#abdac6"/><path d="M3.700 6.700l2 2l3.600-3.900" fill="none" stroke="#e9f6f0" stroke-width="1.400"/></svg>
<div class="t" style="left:692px;top:885.6999999999999px;font-size:11.300px;line-height:14px;color:#ebebeb;letter-spacing:-0.050px">Running</div>
<div class="t" style="left:853px;top:884.4px;font-size:13.300px;line-height:16px;color:#f1f1f1">a few seconds ago</div>
<div class="t" style="left:1036px;top:884.4px;font-size:12.800px;line-height:16px;color:#e9e9e9">sales-01-cluster</div>
<div class="t" style="left:1219.500px;top:884.4px;font-size:12.950px;line-height:16px;color:#e9e9e9;letter-spacing:0.08px">event-detection:1.0.0</div>
<svg class="abs" style="left:1409px;top:885.1999999999999px" width="15" height="15" viewBox="0 0 15 15"><rect x=".2" y=".2" width="14.600" height="14.600" rx="2.200" fill="#f5f5f5"/><path d="M6.300 5.400L4.200 7.500l2.100 2.100M8.700 5.400l2.100 2.100-2.100 2.100" fill="none" stroke="#a6a6a6" stroke-width="1.400"/></svg>
<svg class="abs" style="left:1447.600px;top:885.1999999999999px" width="15" height="15" viewBox="0 0 15 15"><rect x=".2" y=".2" width="14.600" height="14.600" rx="2.200" fill="#f5f5f5"/><path d="M4.300 8.700h1.500v2.600H4.300zM6.800 6.600h1.500v1.600H6.800zM6.800 9.100h1.500v2.200H6.800zM9.300 3.900h1.500v7.400H9.300z" fill="#a8a8a8"/></svg>
<div class="abs" style="left:1475.6px;top:890.9px;width:3.200px;height:3.200px;border-radius:50%;background:#f4f4f4"></div>
<div class="abs" style="left:1480.6px;top:890.9px;width:3.200px;height:3.200px;border-radius:50%;background:#f4f4f4"></div>
<div class="abs" style="left:1485.6px;top:890.9px;width:3.200px;height:3.200px;border-radius:50%;background:#f4f4f4"></div>
<div class="abs" style="left:301px;top:972.5999999999999px;width:1209px;height:1px;background:#c4c4c4"></div>
<div class="t" style="left:383.500px;top:928.4999999999999px;font-size:12.700px;line-height:16px;font-weight:bold;color:#f3f3f3;letter-spacing:0px">event-detection-d6gr29...</div>
<div class="t" style="left:383.500px;top:948.9999999999999px;font-size:12.800px;line-height:16px;color:#dedede;letter-spacing:0.100px">event-detection-d6g...</div>
<svg class="abs" style="left:564.5px;top:931.8px" width="74.5" height="29.4" viewBox="564.5 931.8 74.5 29.4"><rect x="566.3" y="933.5999999999999" width="70.9" height="25.799999999999997" rx="3.5" fill="none" stroke="#f0f0f0" stroke-width="1.6"/></svg>
<div class="abs" style="left:583px;top:943.2999999999998px;width:6.500px;height:6.500px;background:#f2f2f2"></div>
<div class="t" style="left:601px;top:939.4999999999999px;font-size:11px;line-height:14px;font-weight:bold;color:#f2f2f2;letter-spacing:-0.200px">Stop</div>
<svg class="abs" style="left:670px;top:939.4999999999999px" width="14" height="14" viewBox="-0.5 -0.5 14 14"><circle cx="6.500" cy="6.500" r="6.600" fill="#abdac6"/><path d="M3.700 6.700l2 2l3.600-3.900" fill="none" stroke="#e9f6f0" stroke-width="1.400"/></svg>
<div class="t" style="left:692px;top:939.4999999999999px;font-size:11.300px;line-height:14px;color:#ebebeb;letter-spacing:-0.050px">Running</div>
<div class="t" style="left:853px;top:938.1999999999999px;font-size:13.300px;line-height:16px;color:#f1f1f1">a few seconds ago</div>
<div class="t" style="left:1036px;top:938.1999999999999px;font-size:12.800px;line-height:16px;color:#e9e9e9">sales-01-cluster</div>
<div class="t" style="left:1219.500px;top:938.1999999999999px;font-size:12.950px;line-height:16px;color:#e9e9e9;letter-spacing:0.08px">event-detection:1.0.0</div>
<svg class="abs" style="left:1409px;top:938.9999999999999px" width="15" height="15" viewBox="0 0 15 15"><rect x=".2" y=".2" width="14.600" height="14.600" rx="2.200" fill="#f5f5f5"/><path d="M6.300 5.400L4.200 7.500l2.100 2.100M8.700 5.400l2.100 2.100-2.100 2.100" fill="none" stroke="#a6a6a6" stroke-width="1.400"/></svg>
<svg class="abs" style="left:1447.600px;top:938.9999999999999px" width="15" height="15" viewBox="0 0 15 15"><rect x=".2" y=".2" width="14.600" height="14.600" rx="2.200" fill="#f5f5f5"/><path d="M4.300 8.700h1.500v2.600H4.300zM6.800 6.600h1.500v1.600H6.800zM6.800 9.100h1.500v2.200H6.800zM9.300 3.900h1.500v7.400H9.300z" fill="#a8a8a8"/></svg>
<div class="abs" style="left:1475.6px;top:944.6999999999999px;width:3.200px;height:3.200px;border-radius:50%;background:#f4f4f4"></div>
<div class="abs" style="left:1480.6px;top:944.6999999999999px;width:3.200px;height:3.200px;border-radius:50%;background:#f4f4f4"></div>
<div class="abs" style="left:1485.6px;top:944.6999999999999px;width:3.200px;height:3.200px;border-radius:50%;background:#f4f4f4"></div>
<div class="abs" style="left:301px;top:1026.3999999999999px;width:1209px;height:1px;background:#c4c4c4"></div>
<div class="t" style="left:383.500px;top:982.2999999999998px;font-size:12.700px;line-height:16px;font-weight:bold;color:#f3f3f3;letter-spacing:0px">gas-lift-opcua</div>
<div class="t" style="left:383.500px;top:1002.7999999999998px;font-size:12.800px;line-height:16px;color:#dedede;letter-spacing:0.100px">gas-lift-opcua</div>
<svg class="abs" style="left:564.5px;top:985.6px" width="74.5" height="29.4" viewBox="564.5 985.6 74.5 29.4"><rect x="566.3" y="987.4" width="70.9" height="25.799999999999997" rx="3.5" fill="none" stroke="#f0f0f0" stroke-width="1.6"/></svg>
<div class="abs" style="left:583px;top:997.0999999999998px;width:6.500px;height:6.500px;background:#f2f2f2"></div>
<div class="t" style="left:601px;top:993.2999999999998px;font-size:11px;line-height:14px;font-weight:bold;color:#f2f2f2;letter-spacing:-0.200px">Stop</div>
<svg class="abs" style="left:670px;top:993.2999999999998px" width="14" height="14" viewBox="-0.5 -0.5 14 14"><circle cx="6.500" cy="6.500" r="6.600" fill="#abdac6"/><path d="M3.700 6.700l2 2l3.600-3.900" fill="none" stroke="#e9f6f0" stroke-width="1.400"/></svg>
<div class="t" style="left:692px;top:993.2999999999998px;font-size:11.300px;line-height:14px;color:#ebebeb;letter-spacing:-0.050px">Running</div>
<div class="t" style="left:853px;top:991.9999999999999px;font-size:13.300px;line-height:16px;color:#f1f1f1">a few seconds ago</div>
<div class="t" style="left:1036px;top:991.9999999999999px;font-size:12.800px;line-height:16px;color:#e9e9e9">sales-01-cluster</div>
<div class="t" style="left:1219.500px;top:991.9999999999999px;font-size:12.950px;line-height:16px;color:#e9e9e9;letter-spacing:0.11px">kelvin-bridge-opcua-client:...</div>
<svg class="abs" style="left:1409px;top:992.7999999999998px" width="15" height="15" viewBox="0 0 15 15"><rect x=".2" y=".2" width="14.600" height="14.600" rx="2.200" fill="#f5f5f5"/><path d="M6.300 5.400L4.200 7.500l2.100 2.100M8.700 5.400l2.100 2.100-2.100 2.100" fill="none" stroke="#a6a6a6" stroke-width="1.400"/></svg>
<svg class="abs" style="left:1447.600px;top:992.7999999999998px" width="15" height="15" viewBox="0 0 15 15"><rect x=".2" y=".2" width="14.600" height="14.600" rx="2.200" fill="#f5f5f5"/><path d="M4.300 8.700h1.500v2.600H4.300zM6.800 6.600h1.500v1.600H6.800zM6.800 9.100h1.500v2.200H6.800zM9.300 3.900h1.500v7.400H9.300z" fill="#a8a8a8"/></svg>
<div class="abs" style="left:1475.6px;top:998.4999999999999px;width:3.200px;height:3.200px;border-radius:50%;background:#f4f4f4"></div>
<div class="abs" style="left:1480.6px;top:998.4999999999999px;width:3.200px;height:3.200px;border-radius:50%;background:#f4f4f4"></div>
<div class="abs" style="left:1485.6px;top:998.4999999999999px;width:3.200px;height:3.200px;border-radius:50%;background:#f4f4f4"></div>
<div class="abs" style="left:653px;top:363px;width:1px;height:91px;background:#c4c4c4"></div>
<div class="abs" style="left:653px;top:596px;width:1px;height:435px;background:#c4c4c4"></div>
<div class="abs" style="left:1388px;top:363px;width:1px;height:91px;background:#c4c4c4"></div>
<div class="abs" style="left:1388px;top:596px;width:1px;height:435px;background:#c4c4c4"></div>
<div class="abs" style="left:1510px;top:400px;width:15px;height:631px;background:#bcbcbc"></div>
<div class="abs" style="left:1514px;top:404px;width:7px;height:206px;border-radius:3.500px;background:#c5c5c5"></div>
<div class="abs" style="left:654px;top:1020px;width:734px;height:11px;background:#bebebe"></div>
<div class="abs" style="left:658px;top:1021px;width:711px;height:6px;border-radius:3px;background:#c6c6c6"></div>
<div class="t" style="left:301px;top:1052.500px;font-size:13px;line-height:16px;color:#e6e6e6">Show</div>
<div class="abs" style="left:341px;top:1047px;width:96px;height:26.600px;border-radius:3px;background:#c2c2c2"></div>
<div class="t" style="left:351.500px;top:1052.500px;font-size:13.200px;line-height:16px;color:#dedede">32 items</div>
<svg class="abs" style="left:413.500px;top:1057.500px" width="9" height="6" viewBox="0 0 9 6"><path d="M0 .5h9L4.500 5.500z" fill="#e0e0e0"/></svg>
<div class="t" style="left:445px;top:1052.500px;font-size:13.100px;line-height:16px;color:#e6e6e6">per page</div>
<div class="t" style="left:1167.300px;top:1052.500px;font-size:13.100px;line-height:16px;color:#dcdcdc">Showing 1 to 32 items of 44</div>
<svg class="abs" style="left:1351.5px;top:1055.300px" width="14" height="11" viewBox="-0.5 -0.5 14 11"><g ><path d="M6.200 .8L2 5l4.200 4.200M11.700 .8l-4.200 4.200 4.200 4.200" fill="none" stroke="#cdcdcd" stroke-width="2" stroke-linecap="round"/></g></svg>
<svg class="abs" style="left:1384px;top:1055.300px" width="9" height="11" viewBox="-0.5 -0.5 9 11"><g ><path d="M6.200 .8L2 5l4.200 4.200" fill="none" stroke="#cdcdcd" stroke-width="2" stroke-linecap="round"/></g></svg>
<div class="t" style="left:1415px;top:1052.500px;font-size:13px;line-height:16px;font-weight:bold;color:#f4f4f4">1</div>
<div class="t" style="left:1446px;top:1052.500px;font-size:13px;line-height:16px;color:#dedede">2</div>
<svg class="abs" style="left:1476.5px;top:1055.300px" width="9" height="11" viewBox="-0.5 -0.5 9 11"><g transform="scale(-1,1) translate(-8,0)"><path d="M6.200 .8L2 5l4.200 4.200" fill="none" stroke="#f2f2f2" stroke-width="2" stroke-linecap="round"/></g></svg>
<svg class="abs" style="left:1504.5px;top:1055.300px" width="14" height="11" viewBox="-0.5 -0.5 14 11"><g transform="scale(-1,1) translate(-13,0)"><path d="M6.200 .8L2 5l4.200 4.200M11.700 .8l-4.200 4.200 4.200 4.200" fill="none" stroke="#f2f2f2" stroke-width="2" stroke-linecap="round"/></g></svg>
</div><!--/main-content-->

<!-- ============ HIGHLIGHT ============ -->
<div id="hl">
<!-- spotlight: un-dimmed original UI inside blue frame -->
<div class="abs" style="left:914px;top:477px;width:186px;height:153px;background:#0059cc"></div>
<div class="abs" style="left:924px;top:487px;width:166px;height:133px;background:#202020;overflow:hidden">
 <div class="abs" style="left:-924px;top:-487px;width:1580px;height:1120px">
  <div class="abs" style="left:316px;top:494.200px;width:1179px;height:90.600px;background:#2a2a2a"></div>
  <div class="abs" style="left:316px;top:531px;width:1179px;height:1px;background:#3c3c3c"></div>
  <div class="t" style="left:997px;top:505.700px;font-size:11px;line-height:14px;font-weight:bold;color:#dedede;letter-spacing:-0.130px">Action</div>
  <div class="t" style="left:1082px;top:505.700px;font-size:11px;line-height:14px;font-weight:bold;color:#dedede;letter-spacing:-0.130px">App Version</div>
  <svg class="abs" style="left:996px;top:544px" width="57" height="29" viewBox="996 544 57 29"><rect x="997.800" y="546" width="53.400" height="25.100" rx="3.500" fill="none" stroke="#f4f4f4" stroke-width="1.600"/></svg>
  <div class="t" style="left:1009.500px;top:551.500px;font-size:11px;line-height:14px;font-weight:bold;color:#ffffff;letter-spacing:-0.200px">Apply</div>
  <div class="t" style="left:1082px;top:550.500px;font-size:12.900px;line-height:16px;color:#f0f0f0">1.0.09152249</div>
  <div class="abs" style="left:301px;top:596px;width:1209px;height:1px;background:#3a3a3a"></div>
  <div class="t" style="left:853px;top:615.400px;font-size:13.300px;line-height:16px;color:#f4f4f4">a few seconds ago</div>
  <div class="t" style="left:1036px;top:615.400px;font-size:12.800px;line-height:16px;color:#e0e0e0">sales-01-cluster</div>
 </div>
</div>
<svg class="abs" style="left:960px;top:630px" width="400" height="270" viewBox="960 630 400 270">
 <path d="M1317.200 870L1035 679.500" fill="none" stroke="#0059cc" stroke-width="11.500" stroke-linecap="round"/>
 <path d="M997 653L1046.300 660L1023.600 696.100Z" fill="#0059cc" stroke="#0059cc" stroke-width="11.500" stroke-linejoin="round"/>
</svg>
</div><!--/hl-->

</div></div>
</body>
</html>
